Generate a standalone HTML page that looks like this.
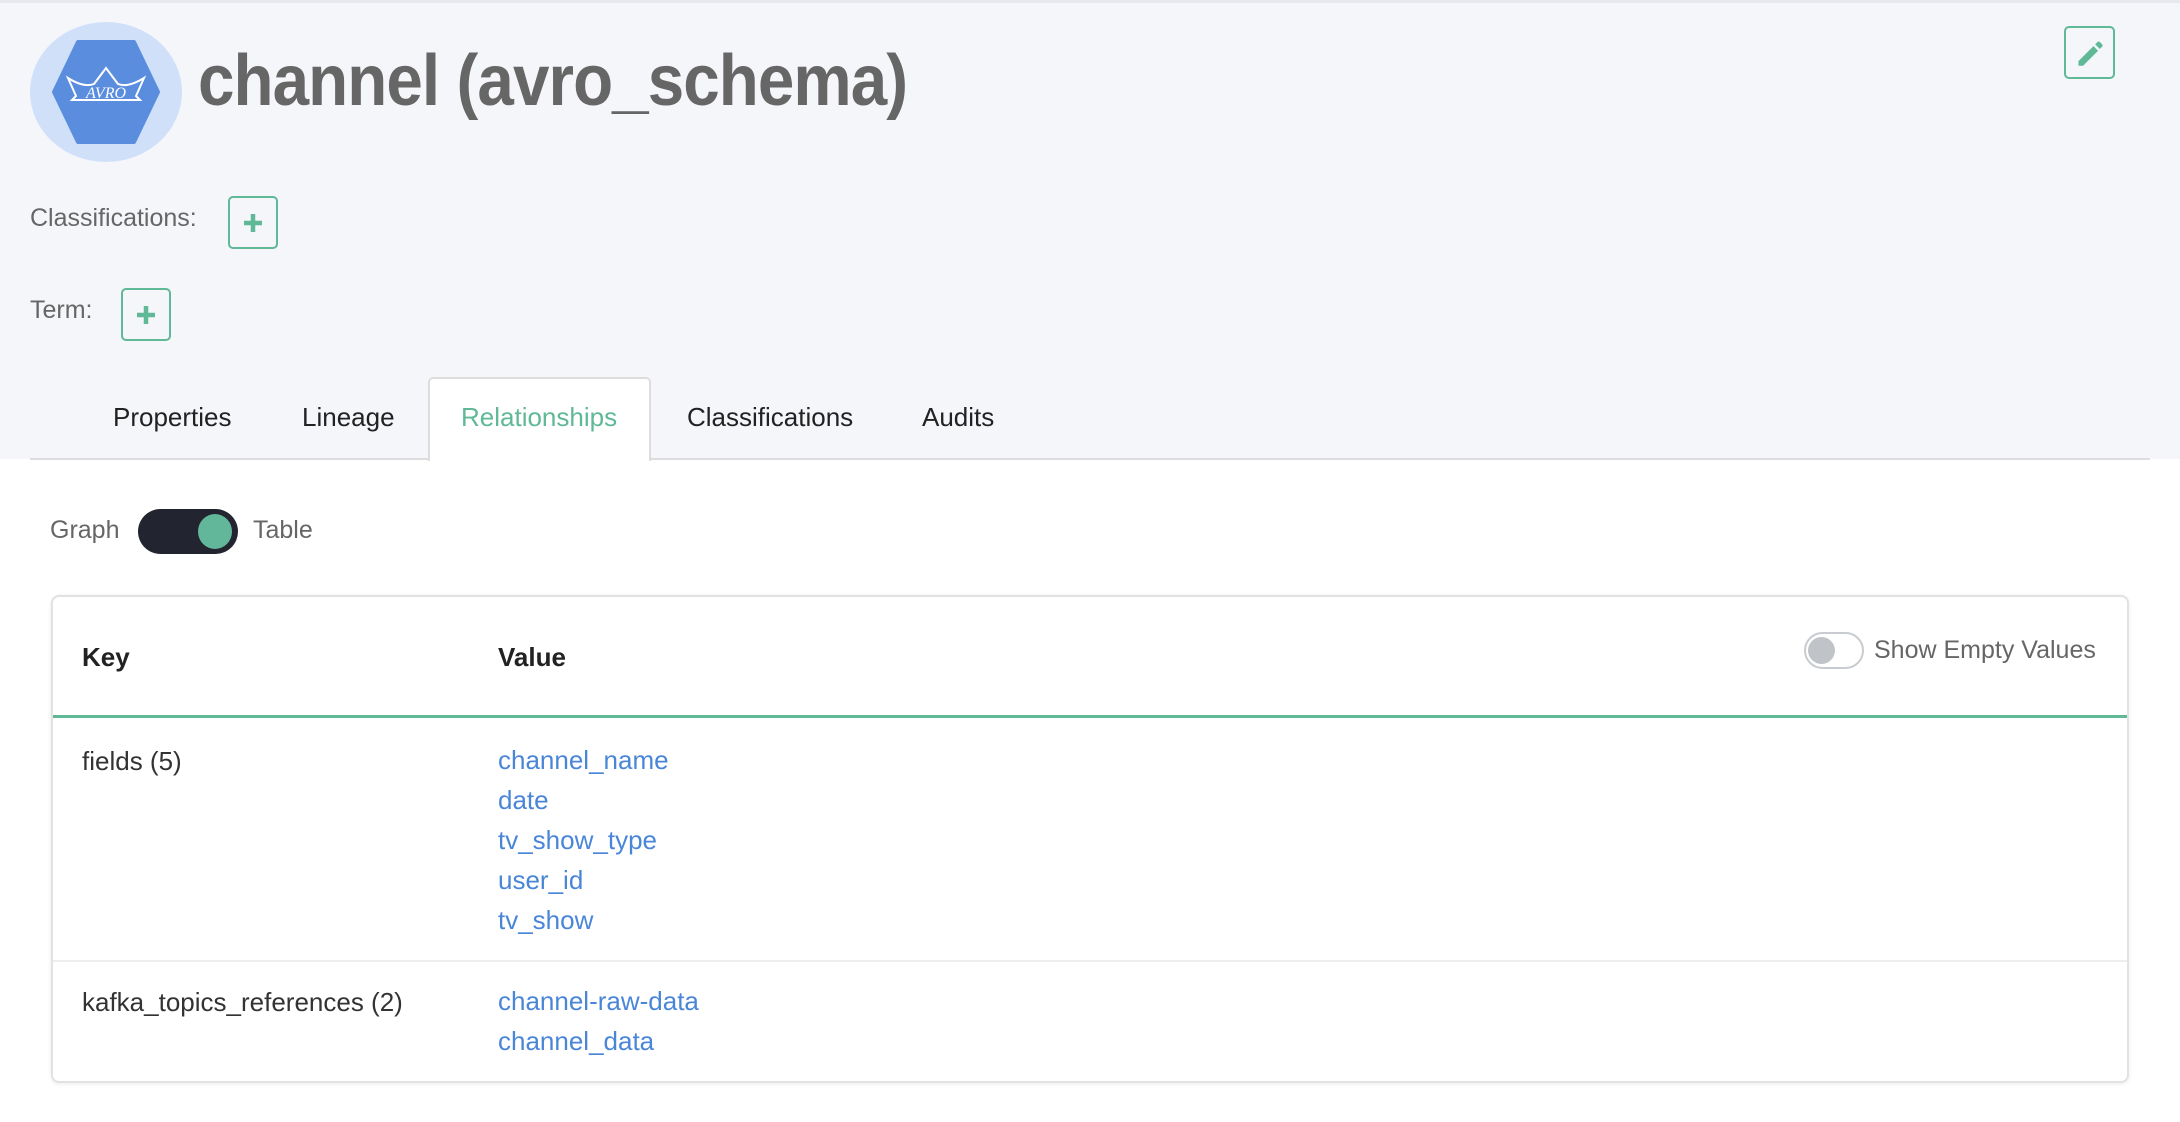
<!DOCTYPE html>
<html><head><meta charset="utf-8"><style>
*{margin:0;padding:0;box-sizing:border-box}
body{width:2180px;height:1122px;background:#fff;font-family:"Liberation Sans",sans-serif;position:relative;overflow:hidden;color:#333}
.hdr{position:absolute;left:0;top:0;width:2180px;height:459px;background:#f5f6fa;border-top:3px solid #e8e9ee}
.abs{position:absolute}
.circle{left:30px;top:22px;width:152px;height:140px;border-radius:50%;background:#d1e0f9}
.title{left:198px;top:40px;font-size:72px;font-weight:bold;color:#666;white-space:nowrap;transform:scaleX(.91);transform-origin:left top;letter-spacing:-1px}
.btn{border:2px solid #5fb896;border-radius:5px;background:#f5f6fa}
.plus{display:flex;align-items:center;justify-content:center}
.lbl{font-size:25px;color:#666}
.tab{font-size:26px;color:#222;top:402px}
.tabline{left:30px;top:458px;width:2120px;height:2px;background:#ddd}
.active{left:428px;top:377px;width:223px;height:84px;background:#fff;border:2px solid #ddd;border-bottom:none;border-radius:5px 5px 0 0}
.card{left:51px;top:595px;width:2078px;height:488px;border:2px solid #e2e2e2;border-radius:8px;box-shadow:0 1px 4px rgba(0,0,0,.08);background:#fff}
.link{color:#4a86d8;font-size:26px;line-height:40px}
.txt{font-size:26px;color:#333}
</style></head><body>
<div class="hdr"></div>
<div class="abs circle"></div>
<svg class="abs" style="left:50px;top:40px" width="112" height="104" viewBox="0 0 112 104">
<path d="M28 2 H84 L108 52 L84 102 H28 L4 52 Z" fill="#5b8ddf" stroke="#5b8ddf" stroke-width="4" stroke-linejoin="round"/>
<path d="M18 38 Q34 48 44 44 L56 28 L68 44 Q78 48 94 38 L86 56 L90 60 H22 L26 56 Z" fill="none" stroke="#fff" stroke-width="2"/>
<text x="56" y="58" font-size="16" fill="#fff" text-anchor="middle" font-family="Liberation Serif" font-style="italic">AVRO</text>
</svg>
<div class="abs title">channel (avro_schema)</div>
<div class="abs btn plus" style="left:2064px;top:26px;width:51px;height:53px">
<svg width="30" height="30" viewBox="0 0 26 26"><path d="M3 20 L16 7 L20 11 L7 24 H3 Z" fill="#5fb896"/><path d="M17.5 5.5 L19.5 3.5 Q20.5 2.5 21.5 3.5 L23.5 5.5 Q24.5 6.5 23.5 7.5 L21.5 9.5 Z" fill="#5fb896"/></svg></div>
<div class="abs lbl" style="left:30px;top:204px">Classifications:</div>
<div class="abs btn plus" style="left:228px;top:196px;width:50px;height:53px"><svg width="24" height="24"><path d="M12 3V21M3 12H21" stroke="#5fb896" stroke-width="4.5"/></svg></div>
<div class="abs lbl" style="left:30px;top:296px">Term:</div>
<div class="abs btn plus" style="left:121px;top:288px;width:50px;height:53px"><svg width="24" height="24"><path d="M12 3V21M3 12H21" stroke="#5fb896" stroke-width="4.5"/></svg></div>
<div class="abs tabline"></div>
<div class="abs active"></div>
<div class="abs tab" style="left:113px">Properties</div>
<div class="abs tab" style="left:302px">Lineage</div>
<div class="abs tab" style="left:461px;color:#5fb896">Relationships</div>
<div class="abs tab" style="left:687px">Classifications</div>
<div class="abs tab" style="left:922px">Audits</div>
<div class="abs lbl" style="left:50px;top:516px">Graph</div>
<div class="abs" style="left:138px;top:509px;width:100px;height:45px;border-radius:23px;background:#22252f"></div>
<div class="abs" style="left:198px;top:514px;width:34px;height:35px;border-radius:50%;background:#62b79a"></div>
<div class="abs lbl" style="left:253px;top:516px">Table</div>
<div class="abs card"></div>
<div class="abs txt" style="left:82px;top:642px;font-weight:bold;color:#222">Key</div>
<div class="abs txt" style="left:498px;top:642px;font-weight:bold;color:#222">Value</div>
<div class="abs" style="left:1804px;top:632px;width:60px;height:37px;border-radius:19px;border:2px solid #c8ccd0;background:#fff"></div>
<div class="abs" style="left:1808px;top:637px;width:27px;height:27px;border-radius:50%;background:#c0c4c8"></div>
<div class="abs lbl" style="left:1874px;top:636px">Show Empty Values</div>
<div class="abs" style="left:53px;top:715px;width:2074px;height:3px;background:#5fb896"></div>
<div class="abs txt" style="left:82px;top:746px">fields (5)</div>
<div class="abs" style="left:498px;top:740px">
<div class="link">channel_name</div><div class="link">date</div><div class="link">tv_show_type</div><div class="link">user_id</div><div class="link">tv_show</div></div>
<div class="abs" style="left:53px;top:960px;width:2074px;height:2px;background:#eee"></div>
<div class="abs txt" style="left:82px;top:987px">kafka_topics_references (2)</div>
<div class="abs" style="left:498px;top:981px">
<div class="link">channel-raw-data</div><div class="link">channel_data</div></div>
</body></html>
